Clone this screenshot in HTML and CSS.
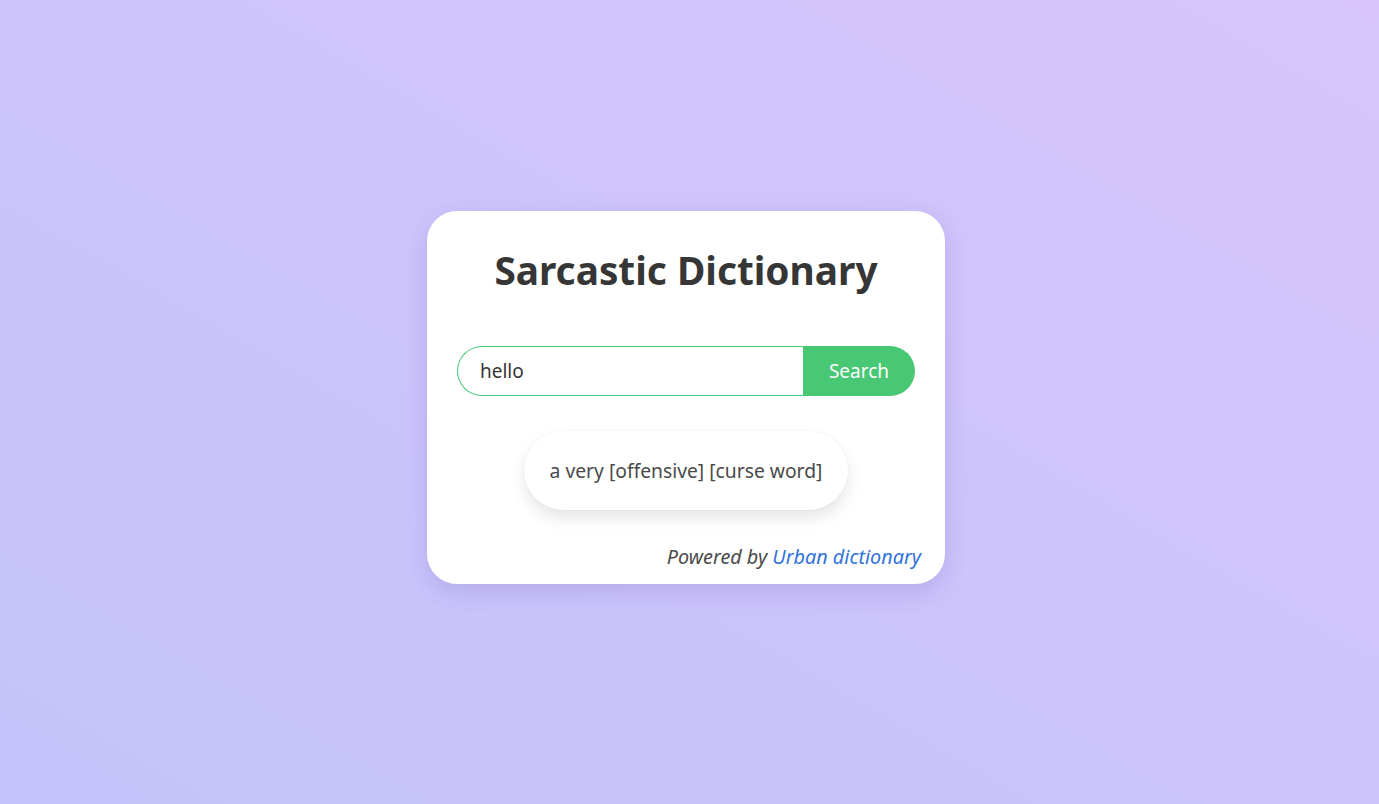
FILE: index.html
```html
<!DOCTYPE html>
<html lang="en">
<head>
<meta charset="utf-8">
<title>Sarcastic Dictionary</title>
<link rel="stylesheet" href="styles.css">
</head>
<body>
<main class="page">
  <section class="card">
    <h1 class="title">Sarcastic Dictionary</h1>
    <form class="search">
      <input class="search-input" type="text" value="hello">
      <button class="search-button" type="button">Search</button>
    </form>
    <div class="result-wrap">
      <div class="result">a very [offensive] [curse word]</div>
    </div>
    <p class="footer">Powered by <a class="footer-link" href="#">Urban dictionary</a></p>
  </section>
</main>
</body>
</html>
```
FILE: styles.css
```css
* { box-sizing: border-box; }
html, body { margin: 0; height: 100%; }
body {
  font-family: "Noto Sans", "Open Sans", sans-serif;
  background: linear-gradient(to top right, #c5c3fb 0%, #cdc4fc 50%, #d7c4fc 100%);
  color: #4a4a4a;
}
.page {
  height: 100%;
  display: flex;
  align-items: center;
  justify-content: center;
  padding-right: 7px;
  padding-bottom: 9px;
}
.card {
  width: 518px;
  background: #fff;
  border-radius: 30px;
  padding: 30px 30px 15px;
  box-shadow: 0 8px 24px rgba(60, 40, 140, 0.15);
}
.title {
  margin: 0;
  padding-top: 5px;
  padding-bottom: 1px;
  text-align: center;
  font-size: 38.8px;
  line-height: 48px;
  font-weight: 700;
  color: #363636;
}
.search {
  display: flex;
  margin-top: 51px;
  height: 50px;
}
.search-input {
  flex: 1;
  min-width: 0;
  height: 50px;
  border: 1px solid #48c774;
  border-right: none;
  border-radius: 25px 0 0 25px;
  padding: 0 22px;
  font-family: inherit;
  font-size: 19px;
  color: #363636;
  outline: none;
  background: #fff;
}
.search-button {
  width: 112px;
  height: 50px;
  border: none;
  border-radius: 0 25px 25px 0;
  background: #48c774;
  color: #fff;
  font-family: inherit;
  font-size: 19px;
  padding: 0;
}
.result-wrap {
  display: flex;
  justify-content: center;
  margin-top: 35px;
}
.result {
  padding: 26px 26px;
  line-height: 27px;
  font-size: 19.3px;
  border-radius: 40px;
  background: #fff;
  box-shadow: 0 8px 16px rgba(0, 0, 0, 0.1), 0 0 0 1px rgba(0,0,0,0.02);
  color: #4a4a4a;
}
.footer {
  margin: 35px -6px 0 0;
  text-align: right;
  font-style: italic;
  font-size: 19.8px;
  line-height: 24px;
  color: #4a4a4a;
}
.footer-link {
  color: #3273dc;
  text-decoration: none;
}
```
